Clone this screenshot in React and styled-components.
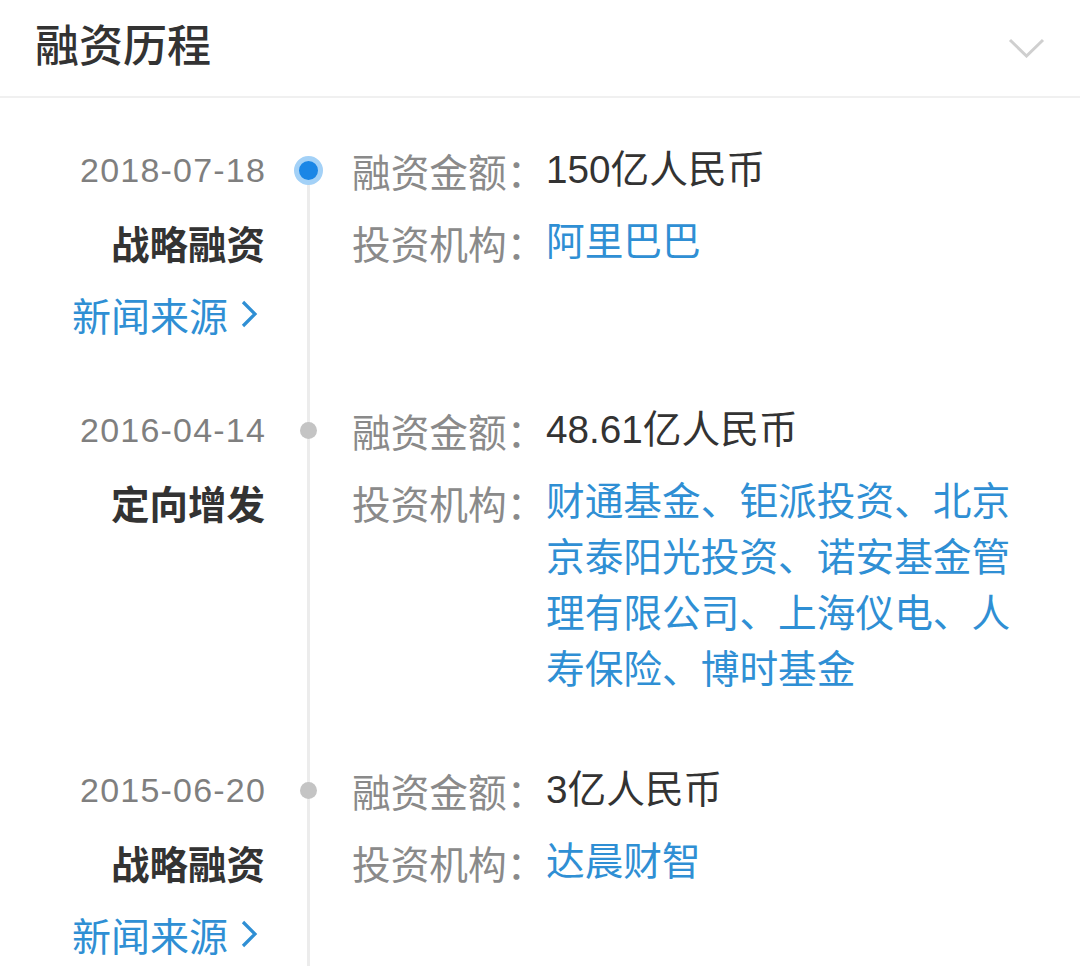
import React from "react";
import styled, { createGlobalStyle } from "styled-components";

const GlobalStyle = createGlobalStyle`
  body {
    margin: 0;
    background: #ffffff;
    font-family: "Liberation Sans", "Noto Sans CJK SC", sans-serif;
  }
`;

const Page = styled.div`
  width: 1080px;
  height: 966px;
  overflow: hidden;
  background: #fff;
`;

const Header = styled.div`
  height: 96px;
  padding: 0 35px;
  display: flex;
  align-items: center;
  justify-content: space-between;
  border-bottom: 2px solid #f0f0f0;
`;

const Title = styled.div`
  font-family: "Noto Sans CJK SC", sans-serif;
  font-size: 44px;
  font-weight: 500;
  color: #333;
  margin-top: -10px;
`;

const Timeline = styled.div`
  padding-top: 44px;
`;

const Entry = styled.div`
  display: grid;
  grid-template-columns: 265px 87px 1fr;
`;

const Side = styled.div`
  display: flex;
  flex-direction: column;
  align-items: flex-end;
  gap: 16px;
  padding-bottom: ${(p) => p.$space}px;
`;

const Line = styled.div`
  line-height: 56px;
  height: 56px;
  white-space: nowrap;
`;

const DateText = styled(Line)`
  font-size: 34px;
  letter-spacing: 1.2px;
  margin-right: -1px;
  color: #7f7f7f;
`;

const Kind = styled(Line)`
  font-family: "Noto Sans CJK SC", sans-serif;
  font-size: 38.5px;
  font-weight: 700;
  color: #333;
`;

const News = styled(Line)`
  font-family: "Noto Sans CJK SC", sans-serif;
  font-size: 39px;
  color: #2f8fd4;
  display: flex;
  align-items: center;
  gap: 12px;
  margin-right: 7px;
`;

const Rail = styled.div`
  position: relative;
  display: flex;
  justify-content: center;
  &::before {
    content: "";
    position: absolute;
    left: 42px;
    width: 3px;
    top: ${(p) => (p.$first ? 28 : 0)}px;
    bottom: 0;
    background: #ececec;
  }
`;

const Dot = styled.div`
  position: relative;
  z-index: 1;
  box-sizing: border-box;
  width: ${(p) => (p.$active ? 29 : 17)}px;
  height: ${(p) => (p.$active ? 29 : 17)}px;
  margin-top: ${(p) => (p.$active ? 14 : 20)}px;
  border-radius: 50%;
  background: ${(p) => (p.$active ? "#1a86e6" : "#c4c4c4")};
  border: ${(p) => (p.$active ? "5px solid #a3d1f7" : "none")};
`;

const Details = styled.div`
  display: flex;
  flex-direction: column;
  gap: 16px;
  font-family: "Noto Sans CJK SC", sans-serif;
  font-size: 38.7px;
  padding-bottom: ${(p) => p.$space}px;
`;

const Row = styled.div`
  display: flex;
  line-height: 56px;
`;

const Label = styled.div`
  width: 194px;
  flex-shrink: 0;
  color: #8a8a8a;
`;

const Value = styled.div`
  width: 466px;
  color: ${(p) => (p.$link ? "#2f8fd4" : "#333")};
  font-family: "Liberation Sans", "Noto Sans CJK SC", sans-serif;
`;

const Chevron = ({ color, dir }) =>
  dir === "down" ? (
    <svg width="37" height="20" viewBox="0 0 37 20">
      <polyline points="2,2 18.5,18 35,2" fill="none" stroke={color} strokeWidth="3" />
    </svg>
  ) : (
    <svg width="18" height="30" viewBox="0 0 18 30">
      <polyline points="3,3 15,15 3,27" fill="none" stroke={color} strokeWidth="3.2" />
    </svg>
  );

const data = [
  {
    date: "2018-07-18",
    kind: "战略融资",
    amount: "150亿人民币",
    investors: "阿里巴巴",
    news: true,
    space: 60,
  },
  {
    date: "2016-04-14",
    kind: "定向增发",
    amount: "48.61亿人民币",
    investors:
      "财通基金、钜派投资、北京京泰阳光投资、诺安基金管理有限公司、上海仪电、人寿保险、博时基金",
    news: false,
    space: 64,
  },
  {
    date: "2015-06-20",
    kind: "战略融资",
    amount: "3亿人民币",
    investors: "达晨财智",
    news: true,
    space: 40,
  },
];

export default function App() {
  return (
    <Page>
      <GlobalStyle />
      <Header>
        <Title>融资历程</Title>
        <Chevron dir="down" color="#cfcfcf" />
      </Header>
      <Timeline>
        {data.map((item, i) => (
          <Entry key={item.date}>
            <Side $space={item.space}>
              <DateText>{item.date}</DateText>
              <Kind>{item.kind}</Kind>
              {item.news && (
                <News>
                  新闻来源
                  <Chevron color="#2f8fd4" />
                </News>
              )}
            </Side>
            <Rail $first={i === 0}>
              <Dot $active={i === 0} />
            </Rail>
            <Details $space={item.space}>
              <Row>
                <Label>融资金额：</Label>
                <Value>{item.amount}</Value>
              </Row>
              <Row>
                <Label>投资机构：</Label>
                <Value $link>{item.investors}</Value>
              </Row>
            </Details>
          </Entry>
        ))}
      </Timeline>
    </Page>
  );
}
